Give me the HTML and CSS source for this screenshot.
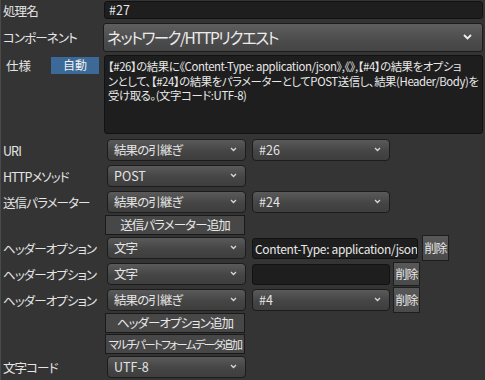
FILE: index.html
```html
<!DOCTYPE html>
<html lang="ja">
  <head>
    <meta charset="UTF-8" />
    <meta name="viewport" content="width=device-width, initial-scale=1.0" />
    <title>処理設定</title>
    <link rel="stylesheet" href="styles.css">
  </head>
  <body>
    <main class="panel">
      <div class="row row-name">
        <div class="label">処理名</div>
        <div class="field field-name">#27</div>
      </div>
      <div class="row row-comp">
        <div class="label">コンポーネント</div>
        <div class="select select-big">
          <span>ネットワーク/HTTPリクエスト</span>
          <svg class="chev" width="9" height="6" viewBox="0 0 9 6"><polyline points="1,1 4.5,4.5 8,1" fill="none" stroke="#f0f0f0" stroke-width="1.8"/></svg>
        </div>
      </div>
      <div class="row row-spec">
        <div class="label label-spec">
          <span>仕様</span>
          <span class="auto">自動</span>
        </div>
        <div class="field memo">【#26】の結果に《Content-Type: application/json》,《》,【#4】の結果をオプショ<br>ンとして、【#24】の結果をパラメーターとしてPOST送信し、結果(Header/Body)を<br>受け取る。(文字コード:UTF-8)</div>
      </div>

      <div class="row">
        <div class="label">URI</div>
        <div class="select"><span>結果の引継ぎ</span><svg class="chev" width="7" height="5" viewBox="0 0 7 5"><polyline points="1,1 3.5,3.5 6,1" fill="none" stroke="#d8d8d8" stroke-width="1.3"/></svg></div>
        <div class="select select-sub"><span>#26</span><svg class="chev" width="7" height="5" viewBox="0 0 7 5"><polyline points="1,1 3.5,3.5 6,1" fill="none" stroke="#d8d8d8" stroke-width="1.3"/></svg></div>
      </div>
      <div class="row">
        <div class="label">HTTPメソッド</div>
        <div class="select"><span class="latin">POST</span><svg class="chev" width="7" height="5" viewBox="0 0 7 5"><polyline points="1,1 3.5,3.5 6,1" fill="none" stroke="#d8d8d8" stroke-width="1.3"/></svg></div>
      </div>
      <div class="row">
        <div class="label">送信パラメーター</div>
        <div class="select"><span>結果の引継ぎ</span><svg class="chev" width="7" height="5" viewBox="0 0 7 5"><polyline points="1,1 3.5,3.5 6,1" fill="none" stroke="#d8d8d8" stroke-width="1.3"/></svg></div>
        <div class="select select-sub"><span>#24</span><svg class="chev" width="7" height="5" viewBox="0 0 7 5"><polyline points="1,1 3.5,3.5 6,1" fill="none" stroke="#d8d8d8" stroke-width="1.3"/></svg></div>
      </div>
      <div class="row row-btn">
        <div class="label"></div>
        <div class="btn">送信パラメーター追加</div>
      </div>

      <div class="row">
        <div class="label">ヘッダーオプション</div>
        <div class="select"><span>文字</span><svg class="chev" width="7" height="5" viewBox="0 0 7 5"><polyline points="1,1 3.5,3.5 6,1" fill="none" stroke="#d8d8d8" stroke-width="1.3"/></svg></div>
        <div class="field field-opt field-long">Content-Type: application/json</div>
        <div class="del del-tall">削除</div>
      </div>
      <div class="row">
        <div class="label">ヘッダーオプション</div>
        <div class="select"><span>文字</span><svg class="chev" width="7" height="5" viewBox="0 0 7 5"><polyline points="1,1 3.5,3.5 6,1" fill="none" stroke="#d8d8d8" stroke-width="1.3"/></svg></div>
        <div class="field field-opt"></div>
        <div class="del">削除</div>
      </div>
      <div class="row">
        <div class="label">ヘッダーオプション</div>
        <div class="select"><span>結果の引継ぎ</span><svg class="chev" width="7" height="5" viewBox="0 0 7 5"><polyline points="1,1 3.5,3.5 6,1" fill="none" stroke="#d8d8d8" stroke-width="1.3"/></svg></div>
        <div class="select select-sub"><span>#4</span><svg class="chev" width="7" height="5" viewBox="0 0 7 5"><polyline points="1,1 3.5,3.5 6,1" fill="none" stroke="#d8d8d8" stroke-width="1.3"/></svg></div>
        <div class="del del-tall">削除</div>
      </div>
      <div class="row row-btn">
        <div class="label"></div>
        <div class="btn">ヘッダーオプション追加</div>
      </div>
      <div class="row row-btn row-btn2">
        <div class="label"></div>
        <div class="btn btn-long">マルチパートフォームデータ追加</div>
      </div>

      <div class="row">
        <div class="label">文字コード</div>
        <div class="select"><span class="latin">UTF-8</span><svg class="chev" width="7" height="5" viewBox="0 0 7 5"><polyline points="1,1 3.5,3.5 6,1" fill="none" stroke="#d8d8d8" stroke-width="1.3"/></svg></div>
      </div>
    </main>
  </body>
</html>
```

FILE: styles.css
```css
* {
  margin: 0;
  padding: 0;
  box-sizing: border-box;
}
body {
  background-color: #343434;
  color: #e4e4e4;
  font-family: "Noto Sans CJK JP", "Noto Sans", sans-serif;
  font-size: 12px;
  font-feature-settings: "palt";
}
.panel {
  width: 485px;
  height: 380px;
  border-left: 1px solid #4a4a4a;
  overflow: hidden;
}
.row {
  display: flex;
  align-items: center;
  height: 26px;
}
.label {
  width: 103px;
  flex-shrink: 0;
  padding-left: 2px;
  white-space: nowrap;
  letter-spacing: -0.9px;
  font-size: 12.5px;
}
.latin {
  letter-spacing: 0;
}

/* top block */
.row-name {
  height: 20px;
}
.row-comp {
  height: 31px;
  margin-top: 2px;
}
.row-spec {
  height: 79px;
  margin-top: 2px;
  margin-bottom: 3px;
  align-items: flex-start;
}
.label-spec {
  display: flex;
  align-items: center;
  padding-left: 5px;
  padding-right: 5px;
  padding-top: 1px;
  letter-spacing: 0;
}
.auto {
  margin-left: auto;
  width: 48px;
  height: 17px;
  line-height: 16px;
  text-align: center;
  background-color: #3c6a98;
  color: #f0f0f0;
  font-size: 12px;
}
.field {
  background-color: #1e1e1e;
  border: 1px solid #121212;
  border-radius: 3px;
  color: #e8e8e8;
  white-space: nowrap;
  overflow: hidden;
}
.field-name {
  width: 379px;
  height: 18px;
  line-height: 16px;
  padding-left: 4px;
  font-size: 12.5px;
}
.memo {
  width: 379px;
  height: 79px;
  padding: 3px 3px;
  font-size: 11.4px;
  line-height: 14.5px;
  letter-spacing: -0.42px;
}

/* selects */
.select {
  display: flex;
  align-items: center;
  justify-content: space-between;
  width: 139px;
  height: 22px;
  margin-left: 3px;
  padding: 0 8px 1px 6px;
  background: linear-gradient(#5a5a5a, #454545 55%, #3e3e3e);
  border: 1px solid #1c1c1c;
  border-radius: 4px;
  color: #e4e4e4;
  white-space: nowrap;
  font-size: 12.5px;
  letter-spacing: -0.9px;
}
.select-sub {
  width: 138px;
  margin-left: 6px;
  letter-spacing: 0;
}
.select-big {
  width: 380px;
  height: 29px;
  margin-left: -1px;
  padding: 0 10px 2px 3px;
  font-size: 15.5px;
  letter-spacing: -1.5px;
  color: #ececec;
  border-radius: 3px;
  background: linear-gradient(#5e5e5e, #4c4c4c 60%, #444);
}
.chev {
  flex-shrink: 0;
}
.field-opt {
  width: 138px;
  height: 21px;
  margin-left: 6px;
  line-height: 19px;
  padding-left: 2px;
  font-size: 12.5px;
}
.field-long {
  width: 166px;
  font-size: 12px;
  letter-spacing: -0.35px;
}
.del {
  width: 27px;
  height: 24px;
  margin-left: 3px;
  line-height: 22px;
  text-align: center;
  background: linear-gradient(#585858, #4a4a4a);
  border: 1px solid #1e1e1e;
  color: #e8e8e8;
  white-space: nowrap;
  font-size: 12px;
  letter-spacing: -1px;
  overflow: hidden;
}
.del-tall {
  height: 26px;
  line-height: 24px;
}
.field-long + .del {
  margin-left: 4px;
}

/* buttons */
.row-btn {
  height: 20px;
}
.row-btn2 {
  margin-top: 1px;
}
.btn {
  width: 140px;
  height: 20px;
  margin-left: 1px;
  line-height: 18px;
  text-align: center;
  background-color: #474747;
  border: 1px solid #1a1a1a;
  color: #e8e8e8;
  white-space: nowrap;
  font-size: 12.5px;
  letter-spacing: -0.9px;
  overflow: hidden;
}
.btn-long {
  font-size: 11.5px;
  letter-spacing: -1.7px;
}
```
